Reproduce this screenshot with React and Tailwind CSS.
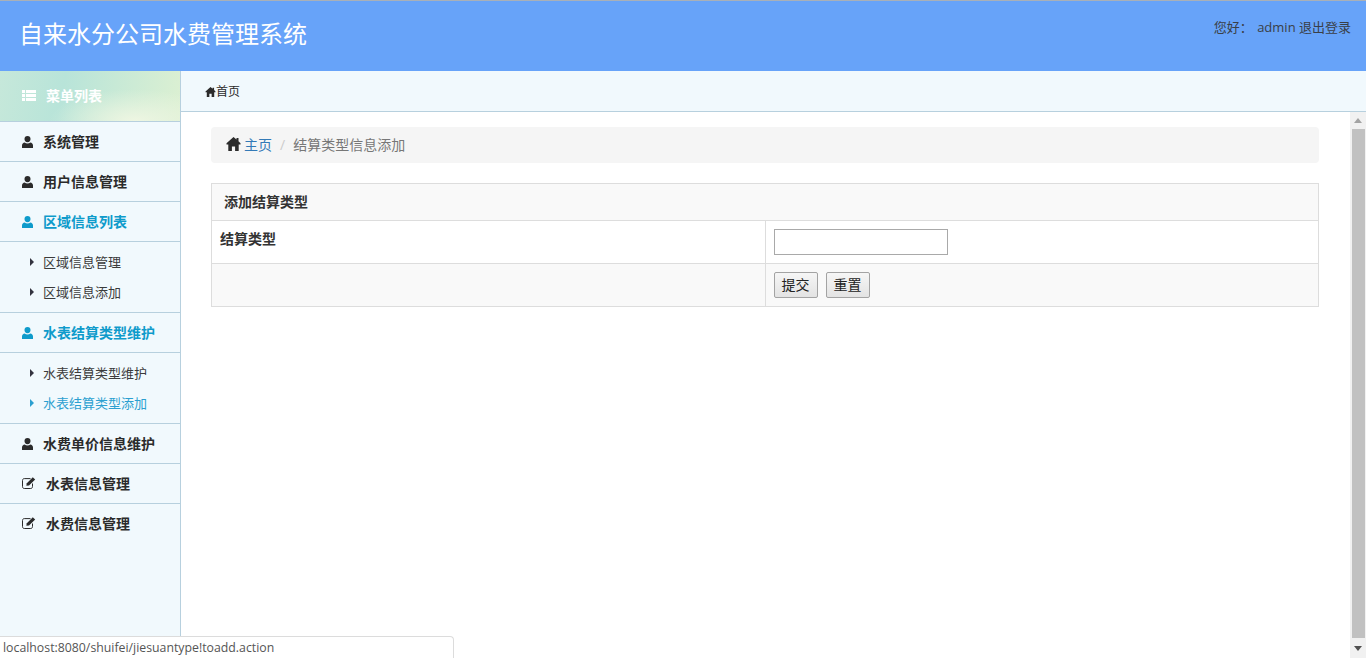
const FONT = "font-['Open_Sans','Noto_Sans_CJK_SC',sans-serif]";

const UserIcon = ({ className }) => (
  <svg viewBox="0 0 11 12" className={className} fill="currentColor" aria-hidden="true">
    <ellipse cx="5.5" cy="3.1" rx="3" ry="3.1" />
    <path d="M0 12 V9.4 C0 7.9 1.2 6.9 2.7 6.6 C3.4 7.2 4.4 7.6 5.5 7.6 C6.6 7.6 7.6 7.2 8.3 6.6 C9.8 6.9 11 7.9 11 9.4 V12 Z" />
  </svg>
);

const EditIcon = ({ className }) => (
  <svg viewBox="0 0 14 12" className={className} aria-hidden="true">
    <path d="M10.5 6.5 V9.5 C10.5 10.8 9.8 11.5 8.7 11.5 H2.3 C1.2 11.5 0.5 10.8 0.5 9.5 V3.5 C0.5 2.3 1.2 1.6 2.3 1.6 H8.5" fill="none" stroke="currentColor" strokeWidth="1" />
    <path d="M4.3 8.8 L4.8 6.2 L10.8 0.2 L13.2 2.6 L7 8.4 Z" fill="currentColor" />
  </svg>
);

const HomeIcon = ({ className }) => (
  <svg viewBox="0 0 14 14" className={className} fill="currentColor" aria-hidden="true">
    <path d="M7 0 L10 2.6 V1 H12 V4.3 L14 6.2 V7.4 H12.2 V14 H8.6 V9.4 H5.4 V14 H1.8 V7.4 H0 V6.2 Z" />
  </svg>
);

const ListIcon = ({ className }) => (
  <svg viewBox="0 0 14 11" className={className} fill="currentColor" aria-hidden="true">
    <path d="M0 0 H3 V3 H0 Z M4 0 H14 V3 H4 Z M0 4 H3 V7 H0 Z M4 4 H14 V7 H4 Z M0 8 H3 V11 H0 Z M4 8 H14 V11 H4 Z" />
  </svg>
);

const Caret = ({ className }) => (
  <svg viewBox="0 0 4 8" className={`w-[4px] h-[8px] ${className}`} fill="currentColor" aria-hidden="true">
    <path d="M0 0 L4 4 L0 8 Z" />
  </svg>
);

const NavRow = ({ icon = "user", label, active = false, last = false }) => (
  <div className={`flex items-center pl-[22px] font-semibold text-[14px] ${active ? "text-[#0e9bcb]" : "text-[#2b2b2b]"} ${last ? "h-[39px]" : "h-[40px] border-b border-[#b7d0de]"}`}>
    {icon === "user" ? (
      <UserIcon className="w-[11px] h-[12px] mr-[10px]" />
    ) : (
      <EditIcon className="w-[14px] h-[12px] mr-[10px] -mt-[1px]" />
    )}
    <span>{label}</span>
  </div>
);

const SubList = ({ items }) => (
  <div className="h-[71px] py-[5px] border-b border-[#b7d0de]">
    {items.map((it) => (
      <div key={it.label} className={`h-[30px] flex items-center pl-[30px] text-[13px] ${it.active ? "text-[#2b9fd0]" : "text-[#3b3b3b]"}`}>
        <Caret className={`mr-[9px] ${it.active ? "text-[#2b9fd0]" : "text-[#33333f]"}`} />
        <span className="pt-[1px]">{it.label}</span>
      </div>
    ))}
  </div>
);

export default function App() {
  return (
    <div className={`relative h-[658px] w-[1366px] overflow-hidden flex flex-col bg-white ${FONT}`}>
      <header className="h-[71px] shrink-0 border-t border-[#a9b0b8] bg-[#67a3f9] flex justify-between">
        <h1 className="pl-[19px] pt-[15px] text-[24px] leading-[36px] text-white font-normal">自来水分公司水费管理系统</h1>
        <div className="pr-[15px] pt-[16px] text-[13px] leading-[20px] text-[#3a3f47]">
          您好： <span className="ml-[1px]">admin</span> 退出登录
        </div>
      </header>

      <div className="flex flex-1 min-h-0">
        <aside className="w-[181px] shrink-0 bg-[#f1f9fd] border-r border-[#b7d0de]">
          <div className="h-[51px] flex items-center pl-[22px] pb-[2px] border-b border-[#b7d0de] text-white font-semibold text-[14px] bg-[radial-gradient(ellipse_at_75%_100%,#eef6e2_0%,transparent_45%),linear-gradient(100deg,#c6e8da_0%,#b8e4d9_35%,#dcf0d2_100%)]">
            <ListIcon className="w-[14px] h-[11px] mr-[10px]" />
            <span>菜单列表</span>
          </div>
          <NavRow label="系统管理" />
          <NavRow label="用户信息管理" />
          <NavRow label="区域信息列表" active />
          <SubList items={[{ label: "区域信息管理" }, { label: "区域信息添加" }]} />
          <NavRow label="水表结算类型维护" active />
          <SubList items={[{ label: "水表结算类型维护" }, { label: "水表结算类型添加", active: true }]} />
          <NavRow label="水费单价信息维护" />
          <NavRow icon="edit" label="水表信息管理" />
          <NavRow icon="edit" label="水费信息管理" last />
        </aside>

        <div className="flex-1 min-w-0 flex flex-col">
          <div className="h-[41px] shrink-0 bg-[#f1f9fd] border-b border-[#b7d0de] flex items-center pl-[24px] pt-[1px] text-[12px] text-[#2b2b2b]">
            <HomeIcon className="w-[11px] h-[10px]" />
            <span>首页</span>
          </div>

          <div className="flex-1 min-h-0 flex">
            <main className="flex-1 min-w-0 pt-[15px] pl-[30px] pr-[31px]">
              <div className="h-[36px] rounded-[4px] bg-[#f5f5f5] flex items-center pl-[15px] text-[14px]">
                <HomeIcon className="w-[15px] h-[14px] mr-[3px] -mt-[2px] text-[#2b2b2b]" />
                <span className="text-[#337ab7] pb-[2px]">主页</span>
                <span className="mx-[8px] text-[#cccccc] pb-[2px]">/</span>
                <span className="text-[#777777] pb-[2px]">结算类型信息添加</span>
              </div>

              <table className="mt-[20px] w-full border-collapse text-[14px] text-[#333333] table-fixed">
                <tbody>
                  <tr className="h-[37px] bg-[#f9f9f9]">
                    <th colSpan={2} className="border border-[#dddddd] pl-[12px] pb-[2px] text-left font-semibold">添加结算类型</th>
                  </tr>
                  <tr className="h-[43px]">
                    <td className="w-[554px] border border-[#dddddd] pl-[8px] pb-[8px] font-semibold">结算类型</td>
                    <td className="border border-[#dddddd] pl-[8px]">
                      <input type="text" className="block w-[174px] h-[26px] border border-[#a9a9a9] bg-white" />
                    </td>
                  </tr>
                  <tr className="h-[43px] bg-[#f9f9f9]">
                    <td className="border border-[#dddddd]"></td>
                    <td className="border border-[#dddddd] pl-[8px]">
                      <div className="flex gap-[8px]">
                        <button className="w-[44px] h-[26px] pb-[2px] rounded-[2px] border border-[#a3a3a3] bg-[linear-gradient(#f6f6f6,#e3e3e3)] text-[14px] text-[#222222]">提交</button>
                        <button className="w-[44px] h-[26px] pb-[2px] rounded-[2px] border border-[#a3a3a3] bg-[linear-gradient(#f6f6f6,#e3e3e3)] text-[14px] text-[#222222]">重置</button>
                      </div>
                    </td>
                  </tr>
                </tbody>
              </table>
            </main>

            <div className="w-[16px] shrink-0 bg-[#f1f1f1] flex flex-col items-center">
              <div className="h-[17px] shrink-0 flex items-center justify-center">
                <svg viewBox="0 0 8 5" className="w-[8px] h-[5px] text-[#a3a3a3]" fill="currentColor" aria-hidden="true"><path d="M4 0 L8 5 H0 Z" /></svg>
              </div>
              <div className="w-[13px] flex-1 bg-[#c1c1c1]"></div>
              <div className="h-[20px] shrink-0 flex items-center justify-center">
                <svg viewBox="0 0 8 5" className="w-[8px] h-[5px] text-[#505050]" fill="currentColor" aria-hidden="true"><path d="M0 0 H8 L4 5 Z" /></svg>
              </div>
            </div>
          </div>
        </div>
      </div>

      <div className="absolute left-0 bottom-0 w-[454px] h-[22px] bg-white border-t border-r border-[#dcdcdc] rounded-tr-[4px] pl-[3px] text-[12.3px] leading-[21px] text-[#555555]">
        localhost:8080/shuifei/jiesuantype!toadd.action
      </div>
    </div>
  );
}
